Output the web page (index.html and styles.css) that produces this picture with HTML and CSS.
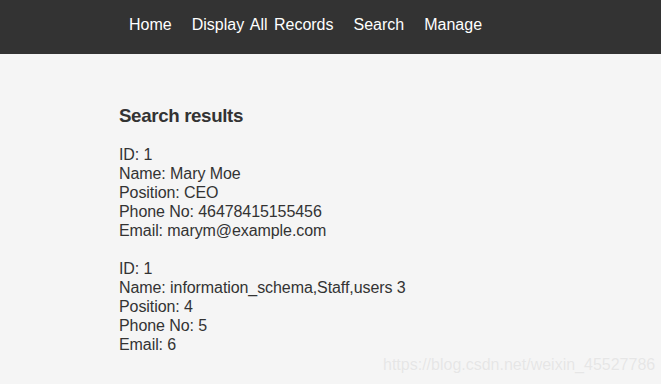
FILE: index.html
```html
<!DOCTYPE html>
<html>
<head>
<meta charset="utf-8">
<link rel="stylesheet" href="styles.css">
</head>
<body>
<nav class="topnav">
  <ul class="menu">
    <li><a href="#">Home</a></li>
    <li><a href="#">Display All Records</a></li>
    <li><a href="#">Search</a></li>
    <li><a href="#">Manage</a></li>
  </ul>
</nav>
<main class="content">
  <h3 class="title">Search results</h3>
  <div class="record">
    ID: 1<br>Name: Mary Moe<br>Position: CEO<br>Phone No: 46478415155456<br>Email: marym@example.com
  </div>
  <div class="record">
    ID: 1<br>Name: information_schema,Staff,users 3<br>Position: 4<br>Phone No: 5<br>Email: 6
  </div>
</main>
<div class="watermark">https://blog.csdn.net/weixin_45527786</div>
</body>
</html>
```

FILE: styles.css
```css
html, body {
  margin: 0;
  padding: 0;
}
body {
  background: #f5f5f5;
  font-family: "Liberation Sans", Arial, sans-serif;
  color: #333;
  height: 384px;
  position: relative;
  overflow: hidden;
}
.topnav {
  background: #333;
  height: 54px;
  display: flex;
  align-items: center;
}
.menu {
  list-style: none;
  margin: 0;
  padding: 0 0 0 119px;
  display: flex;
}
.menu a {
  display: block;
  padding: 0 10px;
  color: #fff;
  text-decoration: none;
  font-size: 16px;
  line-height: 20px;
  margin-top: -4px;
  word-spacing: 2px;
}
.content {
  padding: 51px 0 0 119px;
}
.title {
  font-size: 18.72px;
  letter-spacing: -0.35px;
  font-weight: bold;
  margin: 0 0 18px 0;
  line-height: 22px;
}
.record {
  font-size: 16px;
  line-height: 19px;
  margin-bottom: 19px;
  letter-spacing: -0.08px;
}
.watermark {
  position: absolute;
  left: 383px;
  top: 356px;
  font-size: 16px;
  color: #e6e6e6;
  text-shadow: 0 0 1px #fafafa;
}
```
